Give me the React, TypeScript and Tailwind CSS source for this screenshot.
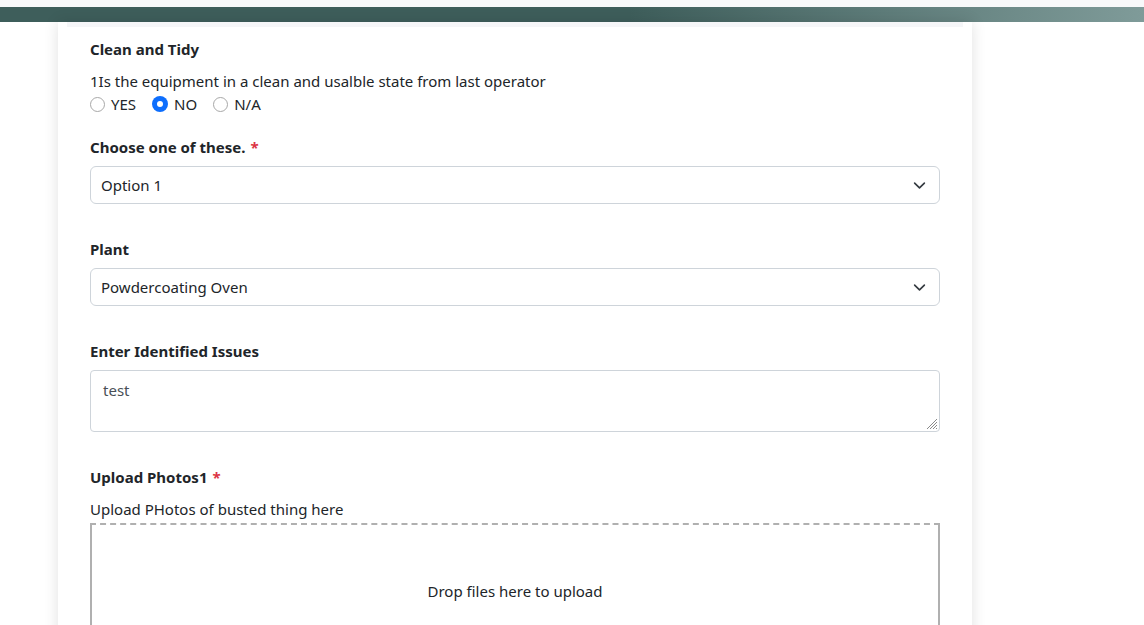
import React from 'react';

const font = { fontFamily: '"Noto Sans", "Open Sans", sans-serif' };

const Chevron = () => (
  <svg width="13" height="13" viewBox="0 0 16 16" fill="none" stroke="#343a40" strokeWidth="2" strokeLinecap="round" strokeLinejoin="round">
    <path d="M2 5l6 6 6-6" />
  </svg>
);

const Radio = ({ checked, label }: { checked?: boolean; label: string }) => (
  <label className="flex items-center gap-[6px] mr-[16px]">
    {checked ? (
      <span className="w-[16px] h-[16px] rounded-full bg-[#0d6efd] flex items-center justify-center">
        <span className="w-[6px] h-[6px] rounded-full bg-white" />
      </span>
    ) : (
      <span className="w-[15px] h-[15px] rounded-full border border-[#a8a8a8] bg-white" />
    )}
    <span>{label}</span>
  </label>
);

const Label = ({ text, required }: { text: string; required?: boolean }) => (
  <div className="font-bold text-[15px] text-[#212529] leading-[22px]">
    {text}
    {required && <span className="text-[#dc3545] ml-[5px]">*</span>}
  </div>
);

const Select = ({ value }: { value: string }) => (
  <div className="h-[38px] border border-[#ced4da] rounded-[6px] flex items-center justify-between pl-[10px] pr-[13px] text-[#212529]">
    <span>{value}</span>
    <Chevron />
  </div>
);

export default function App() {
  return (
    <div style={font} className="min-h-[625px] bg-white text-[15px] text-[#212529] overflow-hidden">
      <div className="h-[7px] bg-[#f8f9fa]" />
      <div className="h-[15px] bg-[linear-gradient(90deg,#3e5e5b_0%,#3e5e5b_55%,#7f9b99_100%)]" />
      <div className="ml-[58px] w-[914px] bg-white shadow-[0_0_14px_rgba(0,0,0,0.12)] min-h-[603px]">
        <div className="mx-[9px] h-[5px] bg-[#f5f6f8]" />
        <div className="px-[32px] pt-[11px]">
          <Label text="Clean and Tidy" />
          <div className="mt-[10px] leading-[22px]">1Is the equipment in a clean and usalble state from last operator</div>
          <div className="mt-[1px] flex items-center leading-[22px]">
            <Radio label="YES" />
            <Radio checked label="NO" />
            <Radio label="N/A" />
          </div>

          <div className="mt-[21px]">
            <Label text="Choose one of these." required />
            <div className="mt-[8px]">
              <Select value="Option 1" />
            </div>
          </div>

          <div className="mt-[34px]">
            <Label text="Plant" />
            <div className="mt-[8px]">
              <Select value="Powdercoating Oven" />
            </div>
          </div>

          <div className="mt-[34px]">
            <Label text="Enter Identified Issues" />
            <div className="mt-[8px] relative h-[62px] border border-[#ced4da] rounded-[4px] px-[12px] pt-[8px] text-[#495057]">
              test
              <svg className="absolute right-[1px] bottom-[1px]" width="14" height="14" viewBox="0 0 14 14" stroke="#8a8a8a" strokeWidth="1">
                <path d="M13 3L3 13M13 6L6 13M13 9L9 13M13 12L12 13" />
              </svg>
            </div>
          </div>

          <div className="mt-[34px]">
            <Label text="Upload Photos1" required />
            <div className="mt-[10px] leading-[22px]">Upload PHotos of busted thing here</div>
            <div className="mt-[3px] h-[140px] border-2 border-[#b0b0b0] [border-top-style:dashed] flex justify-center pt-[55px]">
              Drop files here to upload
            </div>
          </div>
        </div>
      </div>
    </div>
  );
}
